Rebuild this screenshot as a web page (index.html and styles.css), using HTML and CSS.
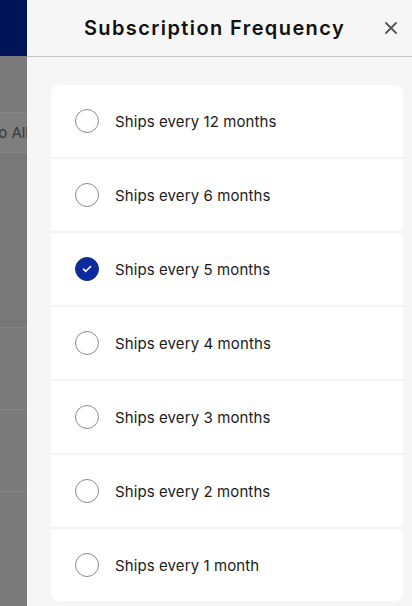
FILE: index.html
```html
<!DOCTYPE html>
<html>
<head>
<meta charset="utf-8">
<link rel="stylesheet" href="styles.css">
</head>
<body>
<div class="backdrop">
  <div class="bd-top"></div>
  <div class="bd-a"></div>
  <div class="bd-btn"><span>Ship to All</span></div>
  <div class="bd-b"></div>
  <div class="bd-c"></div>
  <div class="bd-c"></div>
  <div class="bd-d"></div>
</div>
<div class="panel">
  <div class="header">
    <h1 class="title">Subscription Frequency</h1>
    <button class="close" aria-label="Close">
      <svg width="12" height="12" viewBox="0 0 12 12"><path d="M1 1L11 11M11 1L1 11" stroke="#555" stroke-width="1.8" stroke-linecap="round"/></svg>
    </button>
  </div>
  <div class="body">
    <div class="card">
      <label class="row"><span class="radio"></span><span class="label">Ships every 12 months</span></label>
      <label class="row"><span class="radio"></span><span class="label">Ships every 6 months</span></label>
      <label class="row"><span class="radio checked"><svg width="12" height="10" viewBox="0 0 12 10"><path d="M2.5 5.2L4.8 7.3L9.5 2.6" fill="none" stroke="#fff" stroke-width="1.6" stroke-linecap="round" stroke-linejoin="round"/></svg></span><span class="label">Ships every 5 months</span></label>
      <label class="row"><span class="radio"></span><span class="label">Ships every 4 months</span></label>
      <label class="row"><span class="radio"></span><span class="label">Ships every 3 months</span></label>
      <label class="row"><span class="radio"></span><span class="label">Ships every 2 months</span></label>
      <label class="row"><span class="radio"></span><span class="label">Ships every 1 month</span></label>
    </div>
  </div>
</div>
</body>
</html>
```
FILE: styles.css
```css
* { box-sizing: border-box; }
html, body { margin: 0; padding: 0; }
body {
  width: 412px;
  height: 606px;
  overflow: hidden;
  display: flex;
  font-family: Inter, "Noto Sans", sans-serif;
  background: #f6f6f6;
}
.backdrop {
  width: 27px;
  flex: none;
  overflow: hidden;
  background: #7b7b7b;
  display: flex;
  flex-direction: column;
}
.bd-top { height: 56px; background: #001458; flex: none; }
.bd-a { height: 56px; flex: none; }
.bd-btn {
  height: 41px;
  flex: none;
  border-top: 1px solid #868686;
  border-bottom: 1px solid #868686;
  background: #7e7e7e;
  display: flex;
  align-items: center;
  justify-content: flex-end;
  overflow: hidden;
}
.bd-btn span {
  font-size: 15px;
  color: #3a3a3a;
  white-space: nowrap;
  margin-right: -2px;
}
.bd-b { height: 175px; flex: none; border-bottom: 1px solid #858585; background: #787878; }
.bd-c { height: 82px; flex: none; border-bottom: 1px solid #858585; }
.bd-d { flex: 1; }

.panel {
  flex: 1;
  display: flex;
  flex-direction: column;
  background: #f6f6f6;
}
.header {
  height: 57px;
  flex: none;
  border-bottom: 1px solid #c8c8c8;
  display: flex;
  align-items: center;
  justify-content: center;
  position: relative;
}
.title {
  margin: 0;
  font-size: 20px;
  font-weight: 600;
  letter-spacing: 1.4px;
  color: #111;
  margin-left: -10px;
}
.close {
  position: absolute;
  right: 15px;
  top: 22px;
  width: 12px;
  height: 12px;
  padding: 0;
  border: 0;
  background: none;
  display: flex;
}
.body {
  padding: 28px 9px 5px 24px;
}
.card {
  background: #f3f3f3;
  border-radius: 8px;
  display: flex;
  flex-direction: column;
  gap: 2px;
  overflow: hidden;
}
.row {
  height: 72px;
  background: #fff;
  display: flex;
  align-items: center;
  padding-left: 24px;
  gap: 16px;
}
.radio {
  width: 24px;
  height: 24px;
  border-radius: 50%;
  border: 1px solid #8a8a8a;
  flex: none;
  display: flex;
  align-items: center;
  justify-content: center;
}
.radio.checked {
  background: #0a2a9e;
  border-color: #1a2f80;
}
.label {
  font-size: 15px;
  color: #1b1b1b;
  letter-spacing: 0.1px;
}
```
